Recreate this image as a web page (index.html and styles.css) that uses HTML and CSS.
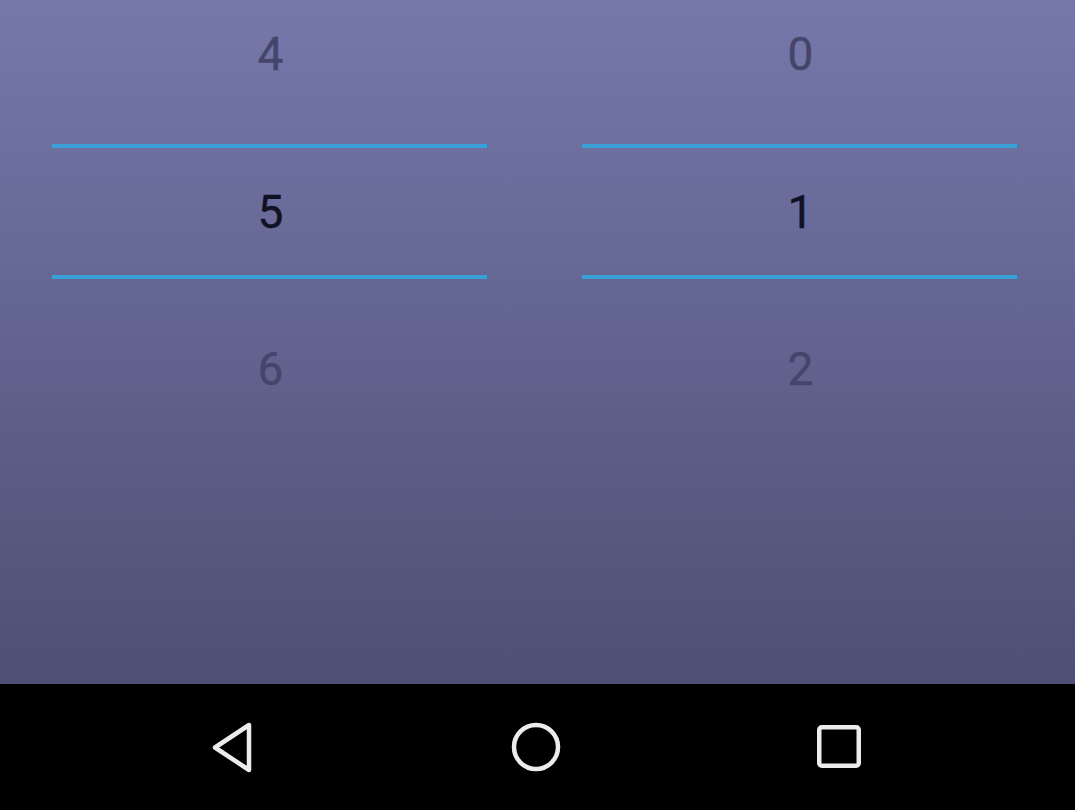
FILE: index.html
```html
<!DOCTYPE html>
<html>
<head>
<meta charset="utf-8">
<link rel="stylesheet" href="styles.css">
</head>
<body>
<div class="screen">
  <main class="content">
    <div class="picker">
      <div class="cell cell-top"><span class="num dim">4</span></div>
      <div class="divider"></div>
      <div class="cell cell-mid"><span class="num sel">5</span></div>
      <div class="divider"></div>
      <div class="cell cell-bot"><span class="num dim">6</span></div>
    </div>
    <div class="picker">
      <div class="cell cell-top"><span class="num dim">0</span></div>
      <div class="divider"></div>
      <div class="cell cell-mid"><span class="num sel">1</span></div>
      <div class="divider"></div>
      <div class="cell cell-bot"><span class="num dim">2</span></div>
    </div>
  </main>
  <nav class="navbar">
    <div class="navbtn">
      <svg width="60" height="60" viewBox="0 0 60 60"><path d="M46 8 L46 53 L12 30.5 Z" fill="none" stroke="#ececec" stroke-width="4.5" stroke-linejoin="round"/></svg>
    </div>
    <div class="navbtn">
      <svg width="60" height="60" viewBox="0 0 60 60"><circle cx="30" cy="30" r="22" fill="none" stroke="#ececec" stroke-width="4.5"/></svg>
    </div>
    <div class="navbtn">
      <svg width="60" height="60" viewBox="0 0 60 60"><rect x="10.25" y="10.25" width="39.5" height="38.5" rx="2.5" fill="none" stroke="#ececec" stroke-width="4.5"/></svg>
    </div>
  </nav>
</div>
</body>
</html>
```

FILE: styles.css
```css
html, body {
  margin: 0;
  padding: 0;
  height: 100%;
}
body {
  font-family: Roboto, "Liberation Sans", sans-serif;
  background: #000;
}
.screen {
  width: 1075px;
  height: 810px;
  display: flex;
  flex-direction: column;
}
.content {
  height: 684px;
  background: linear-gradient(to bottom, #7678aa 0%, #4e4f74 100%);
  display: flex;
  justify-content: space-between;
  padding: 0 58px 0 52px;
  box-sizing: border-box;
}
.picker {
  width: 435px;
  display: flex;
  flex-direction: column;
}
.cell {
  display: flex;
  align-items: center;
  justify-content: center;
}
.cell-top {
  height: 108px;
  margin-bottom: 36px;
}
.cell-mid {
  height: 127px;
}
.cell-bot {
  height: 180px;
}
.divider {
  height: 4px;
  background: #3aa0d8;
}
.num {
  font-size: 46px;
  line-height: 1;
  padding-left: 2px;
  -webkit-text-stroke: 0.4px currentColor;
}
.dim {
  color: #44456a;
}
.sel {
  color: #111126;
}
.navbar {
  height: 126px;
  background: #000;
  display: flex;
  justify-content: center;
  align-items: center;
  gap: 243px;
  padding-right: 3px;
}
.navbtn {
  width: 60px;
  height: 60px;
  display: flex;
}
```
